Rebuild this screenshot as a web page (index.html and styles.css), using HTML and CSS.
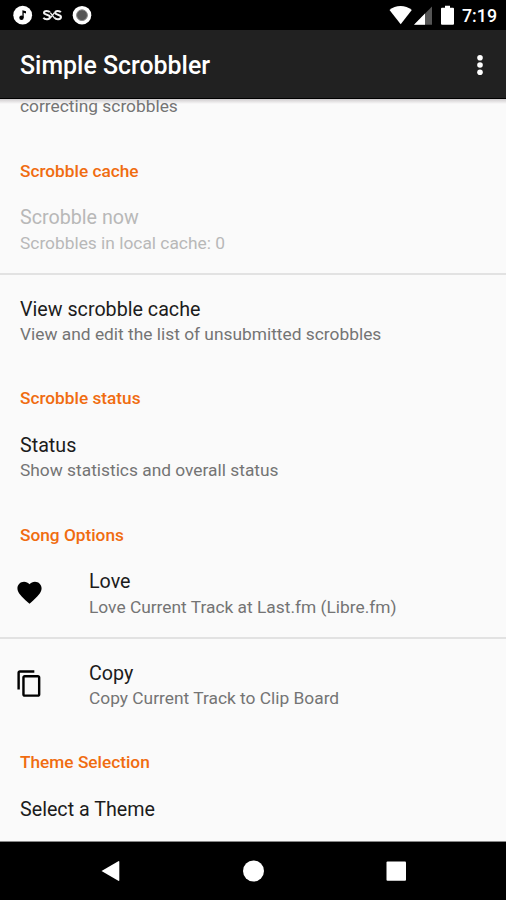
FILE: index.html
```html
<!DOCTYPE html>
<html lang="en">
<head>
<meta charset="utf-8">
<title>Simple Scrobbler</title>
<link rel="stylesheet" href="styles.css">
</head>
<body>
<div class="screen">
  <div class="status-bar">
    <svg class="notifications" width="100" height="30" viewBox="0 0 100 30">
      <circle cx="22.7" cy="15.2" r="9.4" fill="#fff"/>
      <path d="M22.4 17.8V10.2l3.6 1v2.2l-2.3-.7v5.1" fill="#000"/>
      <circle cx="21.5" cy="17.8" r="2.2" fill="#000"/>
      <g fill="none" stroke="#f2f2f2" stroke-width="2">
        <path d="M49.8 12.2C48.8 10.6 44 10.3 44 12.8c0 2.300 6 1.700 6 4.200 0 2.800-5.200 2.700-6.600.7"/>
        <path d="M60.8 12.2c-1-1.600-5.600-1.900-5.600.6 0 2.300 5.800 1.700 5.800 4.200 0 2.800-5 2.700-6.400.7"/>
        <path d="M50.300 12.600l4.200 5.600M54.500 12.600l-4.200 5.600" stroke-width="1.300"/>
      </g>
      <circle cx="82" cy="15.200" r="9.300" fill="#fff"/>
      <circle cx="82" cy="15.200" r="5.400" fill="#555" stroke="#888" stroke-width="1"/>
    </svg>
    <svg class="signals" width="70" height="30" viewBox="0 0 70 30">
      <path d="M.5 10C6.500 4.500 16.500 4.500 22.800 10L11.700 24.300z" fill="#fff"/>
      <path d="M25 24.800L43 6.500V24.800z" fill="#555"/>
      <path d="M25 24.800L36 13.600V24.800z" fill="#fff"/>
      <path d="M53 7.700h3V5.800h5v1.900h3q1 0 1 1v15.100q0 1-1 1H53q-1 0-1-1V8.700q0-1 1-1z" fill="#fff"/>
    </svg>
    <span class="clock">7:19</span>
  </div>
  <header class="app-bar">
    <h1>Simple Scrobbler</h1>
    <svg width="12" height="24" viewBox="0 0 12 24" fill="#fff">
      <circle cx="6" cy="4.700" r="2.800"/><circle cx="6" cy="12" r="2.800"/><circle cx="6" cy="19.300" r="2.800"/>
    </svg>
  </header>
  <main class="content">
    <div class="row cut"><p>correcting scrobbles</p></div>

    <h2>Scrobble cache</h2>
    <div class="row divided disabled"><h3>Scrobble now</h3><p>Scrobbles in local cache: 0</p></div>
    <div class="row"><h3>View scrobble cache</h3><p>View and edit the list of unsubmitted scrobbles</p></div>

    <h2>Scrobble status</h2>
    <div class="row"><h3>Status</h3><p>Show statistics and overall status</p></div>

    <h2>Song Options</h2>
    <div class="row divided with-icon">
      <svg width="29" height="29" viewBox="0 0 24 24"><path d="M12 21.350l-1.450-1.320C5.400 15.360 2 12.280 2 8.500 2 5.420 4.420 3 7.500 3c1.740 0 3.410.810 4.500 2.090C13.090 3.810 14.760 3 16.500 3 19.580 3 22 5.420 22 8.500c0 3.780-3.400 6.860-8.550 11.540L12 21.350z"/></svg>
      <div><h3>Love</h3><p>Love Current Track at Last.fm (Libre.fm)</p></div>
    </div>
    <div class="row with-icon">
      <svg width="29" height="29" viewBox="0 0 24 24"><path d="M16 1H4c-1.100 0-2 .9-2 2v14h2V3h12V1zm3 4H8c-1.100 0-2 .9-2 2v14c0 1.100.9 2 2 2h11c1.100 0 2-.9 2-2V7c0-1.100-.9-2-2-2zm0 16H8V7h11v14z"/></svg>
      <div><h3>Copy</h3><p>Copy Current Track to Clip Board</p></div>
    </div>

    <h2>Theme Selection</h2>
    <div class="row"><h3>Select a Theme</h3></div>
  </main>
  <nav class="nav-bar">
    <svg width="24" height="24" viewBox="0 0 24 24" fill="#fff"><path d="M3.500 12L20.300 2.200q1-.5 1 .6V21.200q0 1-1 .6z"/></svg>
    <svg width="24" height="24" viewBox="0 0 24 24" fill="#fff"><circle cx="12.500" cy="12" r="10.500"/></svg>
    <svg width="24" height="24" viewBox="0 0 24 24" fill="#fff"><rect x="2.500" y="2.500" width="19.500" height="19.300" rx="1"/></svg>
  </nav>
</div>
</body>
</html>
```
FILE: styles.css
```css
* { box-sizing: border-box; }
body, h1, h2, h3, p { margin: 0; }
body { font-family: Roboto, sans-serif; background: #000; }
svg { display: block; flex: none; }

.screen {
  width: 506px;
  height: 900px;
  display: flex;
  flex-direction: column;
  overflow: hidden;
}

.status-bar {
  flex: none;
  height: 30px;
  background: #000;
  color: #fff;
  display: flex;
  align-items: center;
  padding-right: 9px;
}
.signals { margin-left: auto; }
.clock {
  width: 36px;
  margin-left: 2px;
  text-align: right;
  font-size: 17.8px;
  line-height: 30px;
  font-weight: 500;
  white-space: nowrap;
  padding-top: 2px;
}

.app-bar {
  flex: none;
  height: 69px;
  background: #212121;
  border-bottom: 1px solid #000;
  color: #fff;
  display: flex;
  align-items: center;
  justify-content: space-between;
  padding: 0 20px 0 20px;
}
.app-bar h1 {
  font-size: 24.9px;
  line-height: 32px;
  font-weight: 500;
  padding-top: 4px;
}
.app-bar svg { margin-top: 1px; }

.content {
  display: flow-root;
  flex: none;
  height: 743px;
  overflow: hidden;
  background: linear-gradient(#cfcbcd, #fafafa 5px);
  border-bottom: 1px solid #888;
}

h2 {
  height: 45.2px;
  padding: 20.5px 20px 0;
  font-size: 17.25px;
  line-height: 24px;
  font-weight: 500;
  color: #f06c10;
}

.row {
  height: 91.2px;
  padding: 22px 20px 0;
}
.row.cut {
  height: 44.2px;
  padding-top: 0;
  margin-top: -5px;
}
.divided { border-bottom: 2px solid #e2e2e2; }
.row h3 {
  font-size: 19.7px;
  line-height: 26px;
  font-weight: 400;
  color: #1c1c1c;
}
.row p {
  font-size: 17.35px;
  line-height: 24px;
  color: #747474;
  white-space: nowrap;
}
.row h3 + p { margin-top: -0.8px; }
.disabled h3, .disabled p { color: #b8b8b8; }

.with-icon { display: flex; padding-left: 15px; }
.with-icon svg { width: 29px; margin: 8.5px 45px 0 0; }

.nav-bar {
  flex: none;
  height: 58px;
  background: #000;
  display: flex;
  align-items: center;
  justify-content: center;
  gap: 119px;
}
```
